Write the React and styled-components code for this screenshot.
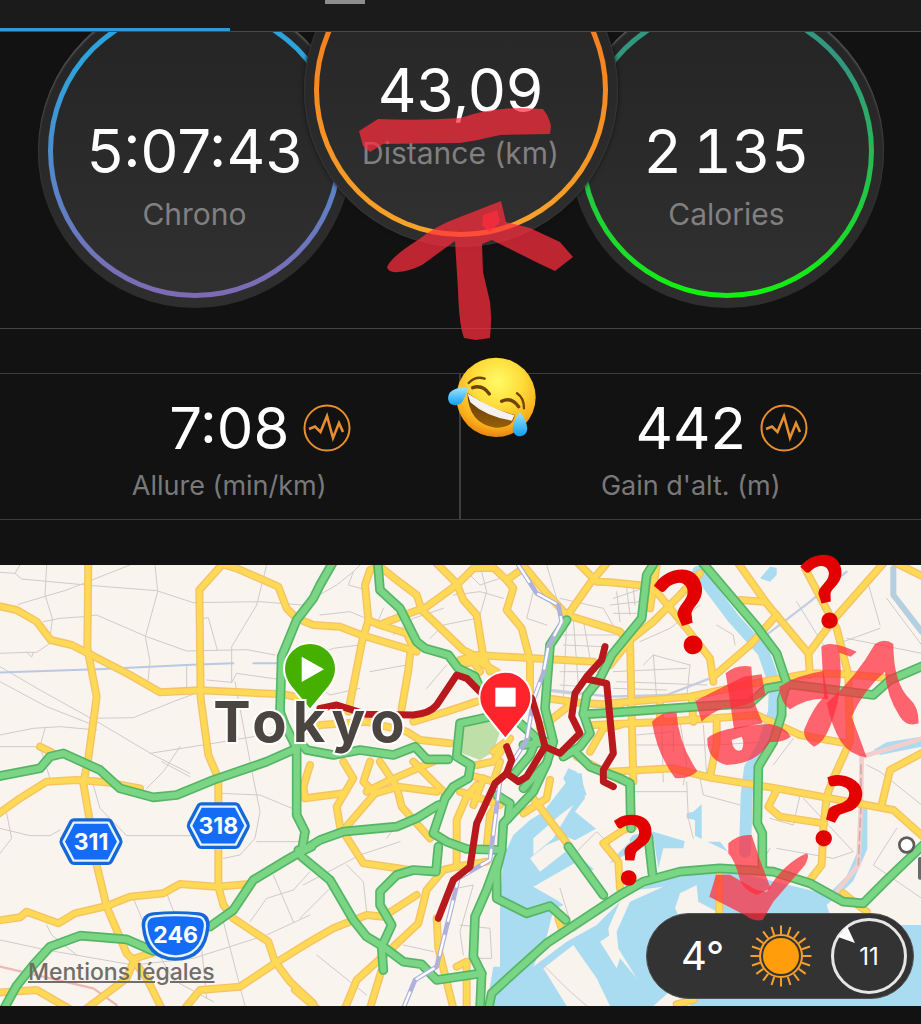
import React from 'react';
import styled, { createGlobalStyle } from 'styled-components';

const GlobalStyle = createGlobalStyle`
  * {
    box-sizing: border-box;
  }
  body {
    margin: 0;
    background: #121213;
    font-family: Inter, "Liberation Sans", "Noto Sans CJK JP", sans-serif;
  }
`;

const dials = [
  { value: '5:07:43', label: 'Chrono', from: '#2da3dd', to: '#8069b3' },
  { value: '43,09', label: 'Distance (km)', from: '#f47b20', to: '#f7a428', front: true },
  { value: '2\u2009135', label: 'Calories', from: '#33977f', to: '#14f010', tabular: true },
];

const stats = [
  { value: '7:08', label: 'Allure (min/km)' },
  { value: '442', label: "Gain d'alt. (m)" },
];

// Map geometry, drawn on a 2763 x 1323 canvas
const minorRoads = [
  'M0 22 45 25 65 42 280 62 470 77 580 113 780 110 930 122',
  'M60 0 45 25M140 0 135 90 157 160 150 220M55 118 200 75 390 0',
  'M130 170 180 160 250 155 290 150 440 215 560 258 740 254 825 270',
  'M465 0 473 80 436 215 450 290 443 355M0 265 80 262 110 262 150 235',
  'M80 262 95 276 100 262M0 305 120 375 300 475 460 570 570 625',
  'M0 350 140 425 280 480M0 510 100 490 180 485 290 495',
  'M270 460 400 458 520 410 600 380M0 545 120 545 135 490M120 545 150 640',
  'M610 160 625 158 652 255M620 345 695 352 710 325 850 345M695 352 695 245 770 120 800 0',
  'M705 350 735 510 760 640 780 740 765 820 720 870 670 880M450 565 640 535 850 500',
  'M540 545 490 620 440 670M485 590 570 635M560 300 560 375',
  'M0 790 90 812 150 812 180 795M280 660 300 730 380 812 600 812M0 865 35 820 20 745',
  'M660 685 780 690 900 740M770 830 900 830M750 1070 800 1000 880 975 930 920M820 930 880 1070',
  'M0 1125 140 1155 400 1200 580 1180 800 1110 930 1050M140 1080 155 1110 230 1170',
  'M400 1000 450 1120 520 1245 640 1310M500 985 525 1050M670 1070 735 1323M600 1100 620 1300',
  'M940 100 1010 60 1060 20 1080 0M1060 20 1045 60 1100 75M960 150 1050 140 1110 165',
  'M950 270 1000 250 1080 240M900 330 990 390 1080 370M1110 320 1220 300M1150 130 1130 180',
  'M1180 210 1240 160 1330 130M1280 370 1340 300M1290 220 1330 180 1430 160M1360 90 1440 80 1510 100',
  'M1440 0 1460 80 1440 150M1400 20 1440 60 1500 40M1600 80 1580 160 1640 180M1640 0 1670 100',
  'M1680 100 1810 130 1850 200M1700 170 1690 400M1720 165 1735 360M1750 165 1770 280M1690 210 1850 210M1690 240 1810 245M1680 320 1800 320M1680 360 1750 365M1650 380 1740 390',
  'M1840 100 1930 70M1850 80 1860 170M1880 70 1890 150M1830 120 1920 110M1840 145 1910 145M1900 70 1905 120',
  'M1920 230 2010 190 2100 120M1930 300 1960 270 2070 300M1840 320 2060 310M1850 350 2120 360M1960 270 1970 400M2070 300 2060 400M2150 180 2200 210 2205 240M1840 370 2000 375',
  'M1910 510 2020 500 2020 560M1900 540 2150 540 2300 530M1985 480 1990 650M2040 470 2060 600 2050 660M2110 480 2120 630',
  'M2390 110 2470 240M2530 230 2640 190M2600 40 2640 180M2540 220 2765 265M2660 100 2765 240M2320 600 2380 520M2400 690 2380 780 2310 760M2410 700 2560 860 2500 880 2330 850',
  'M2600 600 2640 620 2765 720M2690 790 2620 900 2765 1000M1900 680 2060 680M2060 650 2065 760 2080 820M2100 640 2110 690 2220 720M2310 850 2280 900',
  'M910 960 1080 870 1200 830M950 1170 1100 1290M1040 900 1090 950 1100 1040M1160 820 1190 780M900 1060 1000 960M1370 970 1420 960 1380 1100 1390 1170',
  'M1210 1140 1300 1160M1380 1080 1470 1090 1475 1180 1430 1180M1620 1190 1700 1270 1760 1323M1680 970 1720 1100 1840 1020M1730 860 1790 800 1830 840',
];

const waters = [
  'M1510 875 1540 810 1590 765 1630 740 1700 650 1720 625 1745 625 1755 700 1725 740 1860 850 1900 810 1960 800 2060 830 2160 830 2200 880 2200 920 2530 1000 2580 1040 2763 1080V1323H1460L1480 1205 1500 1195V1010Z',
  'M1690 640 1705 610 1730 620 1750 660 1760 690 1720 700Z',
  'M2080 740 2105 718V832H2085V765L2060 760V745Z',
  'M2280 40 2310 5 2330 8 2330 30 2310 50Z',
  'M2620 555 2660 532 2763 515V545L2640 570Z',
];

const lands = [
  'M1590 880 1640 840 1700 815 1735 830 1620 920Z',
  'M1600 965 1740 885 1810 990 1780 1020 1690 1020 1670 1005Z',
  'M1600 820 1680 750 1720 720 1660 820 1600 870Z',
  'M1700 840 1790 790 1880 780 1890 830 1850 870 1800 930Z',
  'M1660 1035 1710 1010 1700 945 1840 890 1960 820 1980 935 1860 1010 1790 1080 1700 1130 1600 1205 1640 1115Z',
  'M1630 1210 1720 1140 1790 1240 1830 1323H1700Z',
  'M1800 1130 1830 1110 1910 1240 1860 1180 1850 1210Z',
  'M1480 1040H1500V1205H1440V1100Z',
  'M1990 850 2050 850 2060 800 2185 860 2220 900 2060 920 1970 930Z',
  'M1860 1010 1910 975 1990 965 1890 1010 1850 1100 1855 1150 1835 1180 1825 1090Z',
  'M2040 985 2090 960 2095 1010 2170 1050 2040 1060 2025 1030Z',
  'M2480 1020 2520 985 2620 1010 2763 900V1080H2500Z',
  'M1960 1323 2020 1270 2080 1300 2070 1323Z',
];

const yellowRoads = [
  'M-10 122 50 135 110 170 152 225 215 240 265 265 390 330 480 382 600 376 850 388 890 396',
  'M265 -10 262 250 290 395 265 580 250 655 268 760 290 900 320 1025 380 1165 400 1185 440 1240 485 1330',
  'M665 0 598 75 602 400 625 570 655 640 655 965 670 1020 700 1060 805 1130 825 1190 870 1250 940 1315',
  'M660 -5 710 10 835 65 860 130 890 160 940 180 1020 185 1090 212 1250 260',
  'M-10 750 60 700 140 650 230 645 320 652 420 670',
  'M120 545 155 562',
  'M1140 5 1110 15 1095 60 1105 165 1085 235 1045 440',
  'M1105 165 1140 180 1220 205 1240 250',
  'M1230 270 1225 315 1205 430',
  'M1140 5 1190 45 1250 90 1265 135 1390 255 1440 280',
  'M1150 175 1280 125 1370 60 1420 10 1480 8 1525 50',
  'M1310 -5 1370 55 1390 105 1430 150 1450 275 1470 320',
  'M1570 10 1520 45 1540 70 1520 135 1565 190 1590 285 1590 400',
  'M1380 285 1430 270 1600 280 1780 290',
  'M1380 300 1420 290 1440 320M1410 275 1490 320',
  'M1565 -5 1640 85 1700 150 1860 200 1880 225',
  'M1820 -5 1770 55 1700 155',
  'M1735 -5 1790 50 1830 52 1935 62',
  'M1240 470 1290 455 1340 440 1430 410',
  'M900 505 960 480 1100 470 1220 500 1260 525 1350 535',
  'M1640 400 1750 415 1860 420',
  'M1620 490 1710 420',
  'M1860 480 1810 490 1770 560',
  'M930 600 910 665 915 700 1030 685',
  'M1030 590 1060 640 1010 725 1020 785 1090 895 1230 915',
  'M1110 590 1090 650 1125 685 1035 790',
  'M1300 590 1160 650 1100 680',
  'M1140 590 1190 665 1205 725 1290 820',
  'M1125 685 1195 665 1310 680',
  'M1240 590 1330 680',
  'M1430 600 1480 590 1530 520 1480 560',
  'M1410 630 1480 650 1500 590',
  'M1370 905 1370 765 1400 695 1430 660',
  'M1380 680 1500 720M1450 640 1420 720',
  'M1460 845 1470 750 1490 720',
  'M1460 890 1370 905 1330 915 1280 975 1255 1075 1170 1155 1070 1245 1035 1330',
  'M555 1330 600 1275 720 1265 825 1195 930 1130 1000 1090 1100 1050 1150 1055 1250 990',
  'M1110 1330 1145 1215',
  'M1310 1060 1315 1150 1360 1330',
  'M1400 1330 1400 1190 1370 1205',
  'M885 1275 950 1330',
  'M1600 700 1705 840',
  'M1650 645 1640 700 1570 745',
  'M1730 575 1860 645',
  'M1900 785 1870 795 1810 835 1855 890 1860 970',
  'M1675 1060 1685 1090',
  'M-10 1067 60 1057 80 1040 175 1075 225 1045 320 1023 390 995 490 985 540 957 650 965 750 957',
  'M-10 1283 110 1275 205 1330',
  'M260 1330 380 1240 405 1180 470 1160',
  'M1890 225 1895 450 1900 650',
  'M2100 25 2040 90 1960 170 1890 225 1830 300',
  'M1970 0 1950 130',
  'M1965 75 2060 190 2130 280 2140 350',
  'M2140 335 2250 240 2330 150',
  'M2215 -5 2300 115 2425 265 2430 330',
  'M2220 105 2290 110',
  'M2650 -5 2500 165 2430 260',
  'M2415 10 2510 190 2545 330 2550 530 2500 640 2480 695 2470 790 2465 900 2430 945',
  'M2690 -5 2770 35',
  'M1830 415 2070 395 2260 355 2430 325 2540 328 2670 340',
  'M1780 480 2000 470 2270 450 2400 510 2540 535',
  'M1830 620 2020 610 2130 638 2330 670 2680 735 2770 815',
  'M2770 562 2670 615 2645 720',
  'M2150 465 2150 535 2130 635',
  'M2330 675 2305 725 2340 755 2470 775',
  'M1980 415 1980 470M2075 400 2080 470',
  'M2158 925 2158 1060',
  'M2530 985 2600 1040',
  'M2030 1318 2080 1305',
];

const greenRoads = [
  'M-10 635 120 610 150 575 190 565 300 615 360 670 460 697 530 690 640 645 800 590 890 550',
  'M1000 -10 960 60 940 100 890 165 845 275 840 440 855 480 890 550 890 750 915 800 905 860',
  'M900 530 920 555 1000 570 1080 555 1180 570 1245 545 1280 583 1345 583',
  'M1133 -10 1140 75 1200 130 1250 230 1275 250 1345 270 1375 310 1425 335 1440 370',
  'M1470 455 1380 475 1370 575 1412 600 1405 640 1360 665 1335 700 1300 805 1340 830 1400 852 1505 855',
  'M900 862 960 825 1030 800 1190 785 1250 760 1315 720',
  'M895 855 905 875 990 945 1060 1065 1100 1115 1150 1145 1210 1190 1265 1198 1310 1245 1445 1225',
  'M1315 845 1308 920 1240 915 1190 930 1140 980 1140 1020 1175 1080 1145 1145 1150 1215',
  'M10 1335 50 1262 100 1200 150 1145 240 1112 380 1123 460 1158',
  'M630 1085 700 1035 760 945 860 885 900 862 935 845',
  'M1700 165 1650 240 1635 430 1660 530 1640 595 1600 680 1510 775 1505 855 1490 915 1490 1000 1580 1045 1650 1023 1697 1065',
  'M1560 475 1610 520 1590 570 1540 630',
  'M1490 690 1530 715 1525 760',
  'M1570 540 1640 530M1640 595 1570 670',
  'M1495 880 1460 975 1425 1055 1420 1175 1445 1225 1440 1335',
  'M1465 1335 1475 1285 1540 1225 1640 1135 1860 990 1930 950 2040 920 2160 910 2320 920 2430 955 2530 1010 2590 1015 2660 945 2775 835',
  'M1705 845 1810 990',
  'M1730 565 1770 605 1860 640 1890 655 1892 745 1893 790M1945 815 1957 925',
  'M1965 -10 1940 30 1925 160 1835 270 1800 340 1760 390 1750 445 1770 505 1740 545 1690 575',
  'M1750 448 1840 443 2090 425 2250 415 2300 370 2370 358 2620 390 2670 345 2775 300',
  'M2105 -10 2270 185 2330 265 2360 355 2345 405 2345 450 2320 530 2275 605 2272 775 2287 805 2287 915',
];

const routes = [
  'M960 430 1010 420 1100 448 1240 450Q1290 445 1310 420L1370 330 1400 340 1440 380',
  'M1595 400 1615 465 1635 545 1680 565 1740 505 1715 455 1725 385 1760 335 1805 285 1815 245',
  'M1760 342 1820 355 1840 565 1810 615 1810 650 1840 665',
  'M1520 545 1535 585 1520 625 1555 650 1580 635 1635 545',
  'M1520 625 1485 655 1430 775 1410 905 1360 945 1315 1060',
];

const railway = 'M1555 0 1610 85 1675 120 1685 170 1645 245 1630 325 1600 405 1580 525 1500 650 1485 765 1470 885 1375 940 1355 1025 1310 1205 1245 1245 1210 1330';

const CityMap = () => (
  <MapDrawing viewBox="0 0 2763 1323" role="img" aria-label="Tokyo">
    <rect width="2763" height="1323" fill="#f9f4ee" />
    {waters.map((d) => <path key={d} d={d} fill="#a9dbf1" />)}
    <Line d="M2095 20 2200 160 2290 260 2325 360 2322 440 2290 540 2250 610 2240 690 2235 860" color="#a9dbf1" width={36} />
    <Line d="M2590 735 2590 850 2550 940 2480 1010" color="#a9dbf1" width={24} />
    <Line d="M2680 10 2680 90 2765 200" color="#b4cfe0" width={18} />
    {lands.map((d) => <path key={d} d={d} fill="#f8f3ec" />)}
    <path d="M1400 465 1480 440 1500 500 1480 560 1440 585 1385 565 1375 500Z" fill="#bfdfa9" />
    {minorRoads.map((d) => <Line key={d} d={d} color="#cfcbc8" width={3} />)}
    <Line d="M-10 323 310 312 560 300 700 295M760 295 850 295" color="#b9c8e4" width={6} />
    <Line d="M1650 375 1830 395 2000 390 2130 340 2260 240 2430 110 2540 20" color="#c3cde2" width={7} />
    <Line d="M0 1205 280 1270 350 1320" color="#edb9b5" width={7} />
    <Line d="M2770 520 2585 575 2583 720 2575 900 2510 980" color="#f3cfcb" width={14} />
    <Line d="M2583 600 2583 720 2575 900" color="#d5a9ae" width={5} dash="26 14" />
    {yellowRoads.map((d) => <Line key={d} d={d} color="#f6c265" width={24} />)}
    {yellowRoads.map((d) => <Line key={d} d={d} color="#fdd955" width={16} />)}
    {greenRoads.map((d) => <Line key={d} d={d} color="#55b567" width={29} />)}
    {greenRoads.map((d) => <Line key={d} d={d} color="#7ad584" width={19} />)}
    <Line d={railway} color="#adb1dc" width={14} />
    <Line d={railway} color="#ffffff" width={7} dash="60 46" />
    {routes.map((d) => <Line key={d} d={d} color="#b8191c" width={21} />)}

    <path d="M930 435 872 365Q852 338 852 312A78 78 0 0 1 1008 312Q1008 338 988 365Z" fill="#45b000" stroke="#fff" strokeWidth="6" />
    <path d="M905 275 972 313 905 351Z" fill="#fff" />
    <CityName x="640" y="530">Tokyo</CityName>
    <path d="M1516 522 1458 450Q1438 424 1438 398A78 78 0 0 1 1594 398Q1594 424 1574 450Z" fill="#ff232b" stroke="#fff" strokeWidth="6" />
    <rect x="1486" y="368" width="61" height="57" fill="#fff" />

    <HexShield x={273} y={830}>311</HexShield>
    <HexShield x={655} y={782}>318</HexShield>
    <path d="M460 1042Q527 1036 596 1042 630 1046 629 1082 620 1186 527 1187 434 1186 425 1082 424 1046 460 1042Z" fill="#1667d8" />
    <path d="M462 1054Q527 1047 592 1054 616 1056 615 1084 606 1172 527 1174 448 1172 439 1084 438 1056 462 1054Z" fill="#146cf6" stroke="#e3f3ff" strokeWidth="7" />
    <ShieldText x="527" y="1133">246</ShieldText>

    <circle cx="2720" cy="840" r="22" fill="#fff" stroke="#5e5c5b" strokeWidth="8" />
    <rect x="2754" y="876" width="14" height="68" rx="6" fill="#6b6967" />
  </MapDrawing>
);

const Line = ({ d, color, width, dash }) => (
  <path d={d} fill="none" stroke={color} strokeWidth={width} strokeDasharray={dash} strokeLinecap="round" strokeLinejoin="round" />
);

const HexShield = ({ x, y, children }) => (
  <g transform={`translate(${x} ${y})`}>
    <path d="M-50 -70H50Q60 -70 66 -60L92 -10Q97 0 92 10L66 60Q60 70 50 70H-50Q-60 70 -66 60L-92 10Q-97 0 -92 -10L-66 -60Q-60 -70 -50 -70Z" fill="#1667d8" />
    <path d="M-52 -57H52L82 0 52 57H-52L-82 0Z" fill="#146cf6" stroke="#e3f3ff" strokeWidth="7" strokeLinejoin="round" />
    <ShieldText x="0" y="25">{children}</ShieldText>
  </g>
);

const PulseIcon = () => (
  <Pulse viewBox="0 0 48 48" aria-hidden="true">
    <circle cx="24" cy="24" r="22.5" />
    <path d="M6 25 12 22.5 17.500 28 24 12 30 34 36 19 40 28" strokeWidth="2.600" />
  </Pulse>
);

const SunIcon = () => (
  <Sun viewBox="0 0 64 64" role="img" aria-label="Ensoleillé">
    <circle cx="32" cy="32" r="18" fill="#ff9d0a" />
    <circle cx="32" cy="32" r="21" fill="none" stroke="#f5a02a" strokeWidth="2" />
    {Array.from({ length: 20 }, (_, i) => (
      <path key={i} d="M32 10V1.500" stroke="#f5a02a" strokeWidth="2" transform={`rotate(${i * 18} 32 32)`} />
    ))}
  </Sun>
);

const LaughingFace = () => (
  <svg x="440" y="340" width="100" height="100" viewBox="0 0 300 300">
    <defs>
      <radialGradient id="face" cx=".52" cy=".3" r=".72">
        <stop offset="0" stopColor="#fffb66" />
        <stop offset=".45" stopColor="#fedb38" />
        <stop offset=".8" stopColor="#fbae1b" />
        <stop offset="1" stopColor="#e67d0b" />
      </radialGradient>
      <linearGradient id="tear" x1="0" y1="0" x2="0" y2="1">
        <stop offset="0" stopColor="#9be4ff" />
        <stop offset="1" stopColor="#119ff0" />
      </linearGradient>
      <linearGradient id="mouth" x1="0" y1="0" x2="0" y2="1">
        <stop offset="0" stopColor="#5c3204" />
        <stop offset="1" stopColor="#96600a" />
      </linearGradient>
    </defs>
    <circle cx="168" cy="172" r="119" fill="url(#face)" />
    <path d="M82 158Q145 205 224 224 222 264 166 263 85 250 82 158Z" fill="url(#mouth)" />
    <path d="M82 160Q150 204 223 226L216 242Q138 230 91 187Z" fill="#f4f1ef" />
    <g fill="none" stroke="#70420a" strokeLinecap="round">
      <path d="M86 129Q106 107 134 116M231 160Q252 174 252 205" strokeWidth="7" />
      <path d="M98 143Q128 133 148 162M185 184Q214 169 236 200" strokeWidth="10" />
    </g>
    <path d="M85 145Q50 138 29 158 18 178 32 192 54 202 68 184 78 165 85 145Z" fill="url(#tear)" />
    <path d="M240 216Q216 248 218 270 224 290 241 289 260 286 262 266 260 240 240 216Z" fill="url(#tear)" />
  </svg>
);

// Finger-painted marks that lie over the whole screen
const Doodles = () => (
  <DoodleLayer viewBox="0 0 921 1024" aria-label="はれ">
    <Brush d="M359 131 378 119Q420 121 460 118 490 108 520 108L543 109Q550 118 551 127L550 134 500 135Q480 140 460 143L383 144 370 152 363 146Z" />
    <Brush d="M387 267Q388 273 398 272 410 271 422 265L455 241 458 290Q459 325 464 338L476 340 490 338Q492 318 490 302L483 272 482 244 492 240 540 264 555 271 573 257 560 242 530 228 506 222 501 201 460 217Q435 226 418 240 392 256 387 267Z" />
    <Brush d="M483 215 497 210 500 222 490 232 482 226Z" />
    <LaughingFace />
    <svg x="610" y="540" width="311" height="250" viewBox="0 0 933 750">
      <Brush d="M126 545Q160 510 200 518 205 610 262 693 240 718 195 714 140 640 126 545Z" />
      <Brush d="M256 482 400 410 455 403 466 465Q400 508 340 505 300 520 275 545Z" />
      <Brush d="M347 400Q380 372 424 380L430 480 458 550 372 568Q360 480 347 400Z" />
      <Brush d="M292 595Q330 560 480 552 530 562 542 590 520 608 480 606 440 672 350 675 290 660 292 595ZM365 600Q370 640 395 630 405 610 395 590Z" />
      <Brush d="M634 320Q660 298 740 335L722 350 688 338Q704 450 660 560 640 610 612 620 580 600 582 570 610 500 642 470Z" />
      <Brush d="M508 440Q560 405 640 393L655 478Q600 470 540 508 512 490 508 440Z" />
      <Brush d="M650 490Q740 410 795 312 825 292 850 312 850 430 900 478 926 500 926 550 890 562 870 530 830 470 825 395 760 450 725 530 755 610 770 652 720 645 693 605 665 560 650 490Z" />
    </svg>
    <svg x="610" y="780" width="311" height="160" viewBox="0 0 933 480">
      <Brush d="M355 190Q385 162 425 165L450 240 482 325 440 345Q400 330 390 300 375 240 355 220Z" />
      <Brush d="M318 284 360 284 440 330 470 335Q520 250 590 220 600 225 585 255L490 365 458 420Q430 425 410 408L298 350Z" />
    </svg>
    <Question x="686" y="612" turn={-17} size={116} />
    <Question x="826" y="592" turn={-12} size={100} />
    <Question x="632" y="850" turn={2} size={96} />
    <Question x="836" y="812" turn={20} size={100} />
  </DoodleLayer>
);

const Question = ({ x, y, turn, size }) => (
  <g transform={`translate(${x} ${y}) rotate(${turn})`}>
    <QuestionText y={Math.round(size * 0.36)} fontSize={size}>?</QuestionText>
  </g>
);

const App = () => (
  <Screen>
    <GlobalStyle />
    <Header>
      <PageMark />
      <Progress />
    </Header>
    <Dials>
      {dials.map((dial) => (
        <Dial key={dial.label} $front={dial.front}>
          <Ring $from={dial.from} $to={dial.to}>
            <DialValue $tabular={dial.tabular}>{dial.value}</DialValue>
            <DialLabel>{dial.label}</DialLabel>
          </Ring>
        </Dial>
      ))}
    </Dials>
    <Stats>
      {stats.map((stat) => (
        <Stat key={stat.label}>
          <StatRow>
            <StatValue>{stat.value}</StatValue>
            <PulseIcon />
          </StatRow>
          <StatLabel>{stat.label}</StatLabel>
        </Stat>
      ))}
    </Stats>
    <MapPanel>
      <CityMap />
      <Legal href="#mentions">Mentions légales</Legal>
      <Weather>
        <Temperature>4°</Temperature>
        <SunIcon />
        <Wind>
          11
          <WindArrow viewBox="0 0 76 76" aria-hidden="true">
            <path d="M7 19 16 8 24 25Z" fill="#fff" />
          </WindArrow>
        </Wind>
      </Weather>
    </MapPanel>
    <Doodles />
  </Screen>
);

export default App;

const Screen = styled.main`
  position: relative;
  min-height: 100vh;
  overflow: hidden;
  background: #121213;
`;

const Header = styled.header`
  display: flex;
  flex-direction: column;
  justify-content: space-between;
  height: 32px;
  background: #1b1b1c;
  border-bottom: 1px solid #4a4a4b;
`;

const PageMark = styled.div`
  width: 40px;
  height: 4px;
  margin-left: 325px;
  background: #8d8d8e;
`;

const Progress = styled.div`
  width: 25%;
  height: 3px;
  background: #2e9bd6;
`;

const Dials = styled.section`
  display: flex;
  justify-content: center;
  align-items: flex-end;
  height: 297px;
  padding-bottom: 20px;
  overflow: hidden;
  border-bottom: 1px solid #454546;
`;

const Dial = styled.div`
  flex: none;
  width: 314px;
  height: 314px;
  padding: 10px;
  border-radius: 50%;
  background: linear-gradient(#242425, #2e2e2f);
  box-shadow: inset 0 2px 2px #5a5a5b;
  ${props => props.$front && `
    z-index: 1;
    margin: 0 -48px 61px;
    box-shadow: inset 0 0 2px #4a4a4b, 0 0 4px #111;
  `}
`;

const Ring = styled.div`
  display: flex;
  flex-direction: column;
  align-items: center;
  height: 294px;
  padding-top: 112px;
  border: 5px solid transparent;
  border-radius: 50%;
  background:
    linear-gradient(#242425, #303031) padding-box,
    linear-gradient(${props => props.$from} 20%, ${props => props.$to}) border-box;
`;

const DialValue = styled.div`
  color: #fff;
  font-size: 60px;
  line-height: 60px;
  font-variant-numeric: ${props => props.$tabular ? 'tabular-nums' : 'normal'};
  white-space: nowrap;
`;

const DialLabel = styled.div`
  margin-top: 15px;
  color: #808081;
  font-size: 30px;
  line-height: 36px;
`;

const Stats = styled.section`
  display: grid;
  grid-template-columns: 1fr 1fr;
  margin: 44px 0 45px;
  border: solid #3d3d3e;
  border-width: 1px 0;
`;

const Stat = styled.div`
  padding: 24px 0 16px;
  text-align: center;
  &:first-child {
    border-right: 2px solid #3d3d3e;
  }
`;

const StatRow = styled.div`
  display: grid;
  grid-template-columns: 1fr auto 1fr;
  align-items: center;
  column-gap: 14px;
`;

const StatValue = styled.div`
  grid-column: 2;
  color: #fff;
  font-size: 58px;
  line-height: 60px;
`;

const StatLabel = styled.div`
  margin-top: 10px;
  color: #79797a;
  font-size: 27px;
  line-height: 35px;
`;

const Pulse = styled.svg`
  width: 48px;
  height: 48px;
  fill: none;
  stroke: #e78f2e;
  stroke-width: 2;
`;

const MapPanel = styled.section`
  position: relative;
`;

const MapDrawing = styled.svg`
  display: block;
  width: 100%;
  height: auto;
`;

const CityName = styled.text`
  fill: #4b4541;
  stroke: #fff;
  stroke-width: 12px;
  paint-order: stroke;
  font-size: 168px;
  font-weight: 700;
  letter-spacing: 18px;
`;

const ShieldText = styled.text`
  fill: #fff;
  font-size: 69px;
  font-weight: 700;
  text-anchor: middle;
`;

const Legal = styled.a`
  position: absolute;
  left: 28px;
  bottom: 20px;
  color: #706d6a;
  font-size: 23px;
  font-weight: 500;
  line-height: 28px;
  text-decoration: underline;
  text-decoration-thickness: 2px;
`;

const Weather = styled.aside`
  position: absolute;
  right: 7px;
  bottom: 7px;
  display: flex;
  align-items: center;
  width: 268px;
  height: 86px;
  padding: 0 6px 0 34px;
  border: 1px solid #525252;
  border-radius: 43px;
  background: #343334;
`;

const Temperature = styled.span`
  flex: 1;
  color: #fff;
  font-size: 40px;
  line-height: 48px;
`;

const Sun = styled.svg`
  width: 64px;
  height: 64px;
  margin-right: 18px;
`;

const Wind = styled.span`
  position: relative;
  display: flex;
  align-items: center;
  justify-content: center;
  width: 76px;
  height: 76px;
  border: 3px solid #e6e6e6;
  border-radius: 50%;
  color: #fff;
  font-size: 24px;
`;

const WindArrow = styled.svg`
  position: absolute;
  inset: -3px;
`;

const DoodleLayer = styled.svg`
  position: absolute;
  top: 0;
  left: 0;
  z-index: 2;
  width: 100%;
  height: auto;
  pointer-events: none;
`;

const Brush = styled.path`
  fill: #ff2d3d;
  fill-opacity: 0.72;
  fill-rule: evenodd;
`;

const QuestionText = styled.text`
  fill: #e30002;
  font-family: Lato, "Open Sans", sans-serif;
  font-weight: 900;
  text-anchor: middle;
`;
